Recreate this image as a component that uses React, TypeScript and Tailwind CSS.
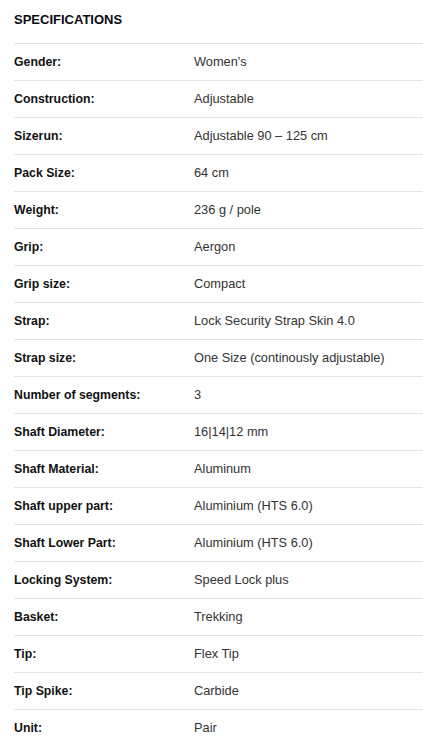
import React from 'react';

const specs: [string, string][] = [
  ['Gender:', "Women's"],
  ['Construction:', 'Adjustable'],
  ['Sizerun:', 'Adjustable 90 – 125 cm'],
  ['Pack Size:', '64 cm'],
  ['Weight:', '236 g / pole'],
  ['Grip:', 'Aergon'],
  ['Grip size:', 'Compact'],
  ['Strap:', 'Lock Security Strap Skin 4.0'],
  ['Strap size:', 'One Size (continously adjustable)'],
  ['Number of segments:', '3'],
  ['Shaft Diameter:', '16|14|12 mm'],
  ['Shaft Material:', 'Aluminum'],
  ['Shaft upper part:', 'Aluminium (HTS 6.0)'],
  ['Shaft Lower Part:', 'Aluminium (HTS 6.0)'],
  ['Locking System:', 'Speed Lock plus'],
  ['Basket:', 'Trekking'],
  ['Tip:', 'Flex Tip'],
  ['Tip Spike:', 'Carbide'],
  ['Unit:', 'Pair'],
];

const App = () => {
  return (
    <div className="bg-white pl-[14px] font-['Liberation_Sans',Arial,sans-serif]">
      <h2 className="h-[43px] pt-[12px] text-[13px] font-bold uppercase leading-[16px] text-[#0a0a14]">
        Specifications
      </h2>
      <div>
        {specs.map(([label, value]) => (
          <div
            key={label}
            className="flex h-[37px] items-center border-t border-[#e4e4e4]"
          >
            <div className="w-[180px] text-[12.3px] font-bold text-[#111]">{label}</div>
            <div className="text-[12.8px] text-[#333]">{value}</div>
          </div>
        ))}
      </div>
    </div>
  );
};

export default App;
